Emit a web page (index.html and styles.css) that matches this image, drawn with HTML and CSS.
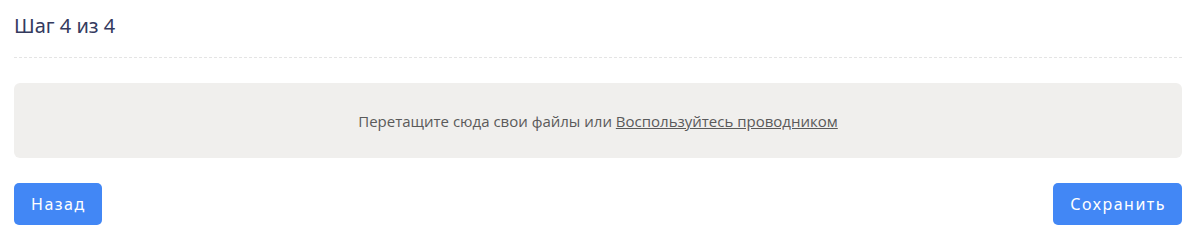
FILE: index.html
```html
<!DOCTYPE html>
<html lang="ru">
<head>
<meta charset="utf-8">
<link rel="stylesheet" href="styles.css">
</head>
<body>
<div class="wizard">
  <div class="step-header">
    <h2 class="step-title">Шаг 4 из 4</h2>
  </div>
  <div class="dropzone">
    <span class="dz-text">Перетащите сюда свои файлы или <a class="dz-link" href="#">Воспользуйтесь проводником</a></span>
  </div>
  <div class="actions">
    <button class="btn">Назад</button>
    <button class="btn">Сохранить</button>
  </div>
</div>
</body>
</html>
```
FILE: styles.css
```css
html, body {
  margin: 0;
  padding: 0;
  background: #ffffff;
}
.wizard {
  padding: 0 14px;
  font-family: "Noto Sans", "Open Sans", sans-serif;
}
.step-header {
  height: 58px;
  border-bottom: 1px dashed #e4e4e4;
  box-sizing: border-box;
  display: flex;
  align-items: flex-start;
}
.step-title {
  margin: 13px 0 0 0;
  font-size: 20px;
  font-weight: 400;
  line-height: 26px;
  color: #343a5e;
}
.dropzone {
  margin-top: 25px;
  height: 75px;
  background: #f0efed;
  border-radius: 6px;
  display: flex;
  align-items: center;
  justify-content: center;
}
.dz-text {
  font-family: "Open Sans", "Noto Sans", sans-serif;
  font-size: 15px;
  color: #5a5a5a;
}
.dz-link {
  color: #5a5a5a;
  text-decoration: underline;
}
.actions {
  margin-top: 25px;
  display: flex;
  justify-content: space-between;
}
.btn {
  height: 42px;
  padding: 0 16px 0 17px;
  border: none;
  border-radius: 5px;
  background: #4287f5;
  color: #ffffff;
  font-family: "Noto Sans", sans-serif;
  font-size: 16px;
  letter-spacing: 1.5px;
  cursor: pointer;
}
```
